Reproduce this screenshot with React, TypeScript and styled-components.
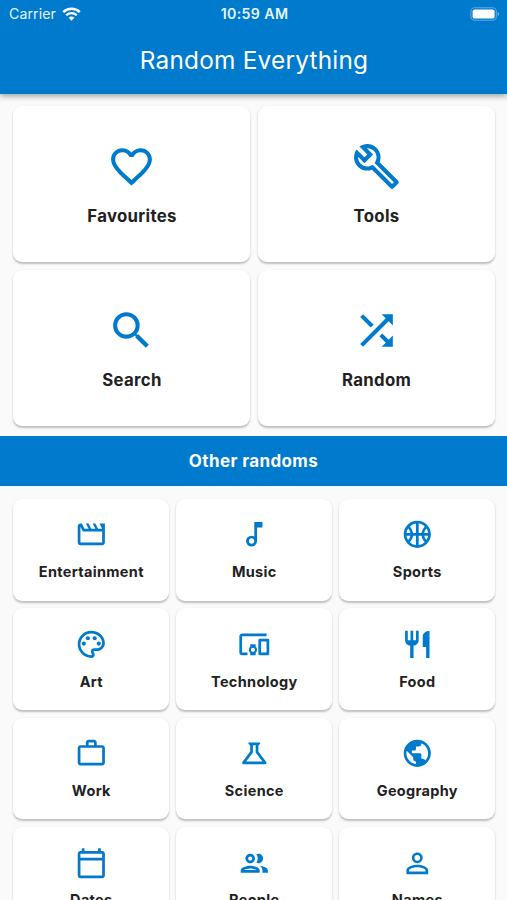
import React from "react";
import styled, { createGlobalStyle } from "styled-components";
import type { IconType } from "react-icons";
import {
  MdFavoriteBorder,
  MdOutlineBuild,
  MdSearch,
  MdShuffle,
  MdOutlineMovie,
  MdOutlineMusicNote,
  MdOutlineSportsBasketball,
  MdOutlinePalette,
  MdOutlineDevicesOther,
  MdRestaurant,
  MdWorkOutline,
  MdOutlineScience,
  MdPublic,
  MdOutlineCalendarToday,
  MdOutlinePeople,
  MdPersonOutline,
} from "react-icons/md";

const BLUE = "#007acc";

const GlobalStyle = createGlobalStyle`
  * { box-sizing: border-box; }
  body {
    margin: 0;
    background: #fafafa;
    font-family: Inter, "Liberation Sans", sans-serif;
  }
`;

const Screen = styled.div`
  width: 507px;
  height: 900px;
  overflow: hidden;
  display: flex;
  flex-direction: column;
  background: #fafafa;
`;

const Header = styled.header`
  flex: none;
  height: 93.5px;
  background: ${BLUE};
  color: #fff;
  box-shadow: 0 2px 6px rgba(0, 0, 0, 0.38);
  z-index: 1;
`;

const StatusBar = styled.div`
  height: 27px;
  padding: 0 7px 0 9px;
  display: grid;
  grid-template-columns: 1fr auto 1fr;
  align-items: center;
  color: #e4f5ff;
`;

const Carrier = styled.div`
  display: flex;
  align-items: center;
  gap: 6px;
  font-size: 14.2px;
  letter-spacing: 0.05px;
`;

const Clock = styled.div`
  font-size: 14.2px;
  font-weight: 600;
  letter-spacing: 0.35px;
`;

const BatterySlot = styled.div`
  display: flex;
  justify-content: flex-end;
`;

const Title = styled.h1`
  margin: 0;
  height: 66px;
  padding-left: 1px;
  line-height: 66px;
  text-align: center;
  font-size: 24.4px;
  font-weight: 400;
  letter-spacing: 0.22px;
`;

const Grid = styled.div<{ $columns: number; $rowHeight: number }>`
  flex: none;
  display: grid;
  grid-template-columns: repeat(${(p) => p.$columns}, 1fr);
  grid-auto-rows: ${(p) => p.$rowHeight}px;
  gap: 7.8px 7.4px;
  padding: 12.9px 12.4px 0 13px;
`;

const Card = styled.button<{ $large?: boolean }>`
  border: 0;
  margin: 0;
  padding: ${(p) => (p.$large ? "35.5px 0 0" : "19.3px 0 0")};
  display: flex;
  flex-direction: column;
  align-items: center;
  gap: ${(p) => (p.$large ? "13px" : "9.2px")};
  font-family: inherit;
  color: #212121;
  background: #fff;
  border-radius: 9px;
  box-shadow: 0 1.2px 2px rgba(0, 0, 0, 0.24);

  svg {
    flex: none;
    color: ${BLUE};
    width: ${(p) => (p.$large ? 49 : 32.6)}px;
    height: ${(p) => (p.$large ? 49 : 32.6)}px;
  }
`;

const Label = styled.span<{ $large?: boolean }>`
  padding-left: 1px;
  font-size: ${(p) => (p.$large ? 16.8 : 14.5)}px;
  line-height: 24px;
  font-weight: 650;
  letter-spacing: ${(p) => (p.$large ? 0.3 : 0.32)}px;
`;

const SectionBar = styled.h2`
  flex: none;
  margin: 9.6px 0 0;
  height: 50.4px;
  line-height: 50px;
  text-align: center;
  background: ${BLUE};
  color: #fff;
  font-size: 17px;
  font-weight: 650;
  letter-spacing: 0.38px;
`;

type Item = { label: string; icon: IconType };

const primary: Item[] = [
  { label: "Favourites", icon: MdFavoriteBorder },
  { label: "Tools", icon: MdOutlineBuild },
  { label: "Search", icon: MdSearch },
  { label: "Random", icon: MdShuffle },
];

const others: Item[] = [
  { label: "Entertainment", icon: MdOutlineMovie },
  { label: "Music", icon: MdOutlineMusicNote },
  { label: "Sports", icon: MdOutlineSportsBasketball },
  { label: "Art", icon: MdOutlinePalette },
  { label: "Technology", icon: MdOutlineDevicesOther },
  { label: "Food", icon: MdRestaurant },
  { label: "Work", icon: MdWorkOutline },
  { label: "Science", icon: MdOutlineScience },
  { label: "Geography", icon: MdPublic },
  { label: "Dates", icon: MdOutlineCalendarToday },
  { label: "People", icon: MdOutlinePeople },
  { label: "Names", icon: MdPersonOutline },
];

const Wifi = () => (
  <svg width="19" height="14" viewBox="0 0 19 14" fill="none">
    <path d="M1.2 5.1a12 12 0 0 1 16.6 0" stroke="#fff" strokeWidth="2.5" />
    <path d="M4.2 8.3a7.6 7.6 0 0 1 10.6 0" stroke="#fff" strokeWidth="2.3" />
    <path d="M9.5 13.8 6.6 10.8a4.2 4.2 0 0 1 5.8 0z" fill="#fff" />
  </svg>
);

const Battery = () => (
  <svg width="30" height="14" viewBox="0 0 30 14" fill="none">
    <rect x="0.9" y="0.7" width="25.4" height="12.6" rx="3.8" stroke="#fff" strokeOpacity="0.36" strokeWidth="1.1" />
    <rect x="2.6" y="2.4" width="22" height="9.2" rx="2.2" fill="#fff" />
    <path d="M27.7 4.9a2.3 2.3 0 0 1 0 4.2z" fill="#fff" fillOpacity="0.45" />
  </svg>
);

const Tiles = ({ items, large }: { items: Item[]; large?: boolean }) => (
  <Grid $columns={large ? 2 : 3} $rowHeight={large ? 156 : 101.6}>
    {items.map(({ label, icon: Icon }) => (
      <Card key={label} $large={large}>
        <Icon />
        <Label $large={large}>{label}</Label>
      </Card>
    ))}
  </Grid>
);

export default function App() {
  return (
    <Screen>
      <GlobalStyle />
      <Header>
        <StatusBar>
          <Carrier>
            Carrier
            <Wifi />
          </Carrier>
          <Clock>10:59 AM</Clock>
          <BatterySlot>
            <Battery />
          </BatterySlot>
        </StatusBar>
        <Title>Random Everything</Title>
      </Header>
      <Tiles items={primary} large />
      <SectionBar>Other randoms</SectionBar>
      <Tiles items={others} />
    </Screen>
  );
}
